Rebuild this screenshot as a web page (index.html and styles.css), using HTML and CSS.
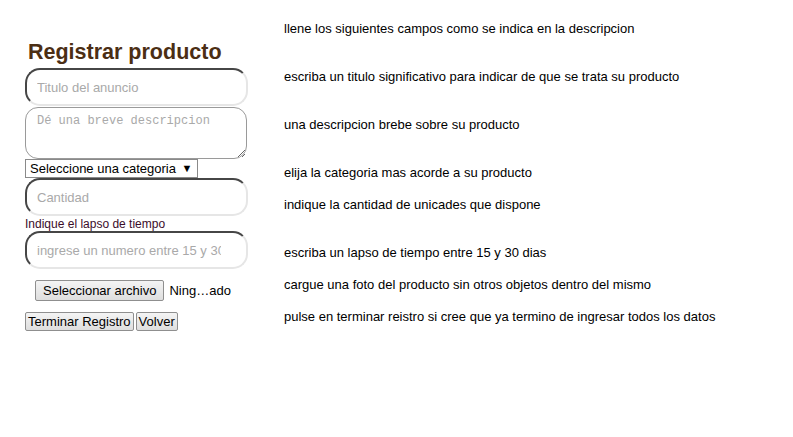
FILE: index.html
```html
<!DOCTYPE html>
<html lang="es">
<head>
<meta charset="utf-8">
<title>Registrar producto</title>
<link rel="stylesheet" href="styles.css">
</head>
<body>
<div class="page">
  <form class="form-col">
    <h1 class="title">Registrar producto</h1>
    <input class="field" type="text" placeholder="Titulo del anuncio">
    <textarea class="area" placeholder="Dé una breve descripcion"></textarea>
    <div class="select">Seleccione una categoria <span class="arrow">▼</span></div>
    <input class="field" type="text" placeholder="Cantidad">
    <div class="label">Indique el lapso de tiempo</div>
    <input class="field field-narrow" type="text" placeholder="ingrese un numero entre 15 y 30">
    <div class="file-row">
      <span class="btn btn-file">Seleccionar archivo</span>
      <span class="file-name">Ning…ado</span>
    </div>
    <div class="actions">
      <button class="btn" type="button">Terminar Registro</button>
      <button class="btn" type="button">Volver</button>
    </div>
  </form>
  <div class="help-col">
    <p class="help">llene los siguientes campos como se indica en la descripcion</p>
    <p class="help gap-l">escriba un titulo significativo para indicar de que se trata su producto</p>
    <p class="help gap-l">una descripcion brebe sobre su producto</p>
    <p class="help gap-l">elija la categoria mas acorde a su producto</p>
    <p class="help gap-s">indique la cantidad de unicades que dispone</p>
    <p class="help gap-l">escriba un lapso de tiempo entre 15 y 30 dias</p>
    <p class="help gap-s">cargue una foto del producto sin otros objetos dentro del mismo</p>
    <p class="help gap-s">pulse en terminar reistro si cree que ya termino de ingresar todos los datos</p>
  </div>
</div>
</body>
</html>
```

FILE: styles.css
```css
html, body {
  margin: 0;
  padding: 0;
  background: #ffffff;
}
body {
  font-family: "Liberation Sans", Arial, sans-serif;
  font-size: 13px;
  color: #000;
}
.page {
  display: flex;
  align-items: flex-start;
}
.form-col {
  width: 223px;
  margin-left: 25px;
  margin-top: 40px;
  display: flex;
  flex-direction: column;
  align-items: flex-start;
}
.title {
  margin: 0 0 3px 3px;
  font-size: 21.5px;
  line-height: 25px;
  font-weight: bold;
  color: #4b2e14;
}
.field {
  box-sizing: border-box;
  width: 223px;
  height: 38px;
  margin: 0;
  padding: 0 10px;
  border: 2px inset #ececec;
  border-top-color: #9a9a9a;
  border-left-color: #9a9a9a;
  border-right-color: #e6e6e6;
  border-bottom-color: #e6e6e6;
  border-radius: 15px;
  font-family: "Liberation Sans", Arial, sans-serif;
  font-size: 13px;
  color: #000;
  background: #fff;
  outline: none;
}
.field::placeholder {
  color: #a9a9a9;
}
.field-narrow {
  padding-right: 25px;
}
.area {
  box-sizing: border-box;
  width: 222px;
  height: 52px;
  margin: 1px 0 0 0;
  padding: 6px 11px;
  border: 1px solid #9a9a9a;
  border-radius: 13px;
  font-family: "Liberation Mono", "Courier New", monospace;
  font-size: 12px;
  background: #fff;
  resize: both;
  outline: none;
}
.area::placeholder {
  color: #a9a9a9;
}
.select {
  box-sizing: border-box;
  width: 173px;
  height: 19px;
  margin-top: 0;
  padding: 0 0 0 4px;
  border: 1px solid #8a8a8a;
  font-size: 13px;
  line-height: 17px;
  white-space: nowrap;
  background: #fff;
}
.arrow {
  font-size: 11px;
  margin-left: 2px;
  vertical-align: 1px;
}
.label {
  margin-top: 1px;
  font-size: 12px;
  line-height: 14px;
  color: #3b0d2a;
}
.file-row {
  margin-top: 11px;
  margin-left: 10px;
  display: flex;
  align-items: center;
  gap: 5px;
  white-space: nowrap;
}
.btn {
  box-sizing: border-box;
  display: inline-block;
  margin: 0;
  padding: 1px 2px;
  font-family: "Liberation Sans", Arial, sans-serif;
  font-size: 13px;
  line-height: 15px;
  color: #000;
  background: linear-gradient(#f4f4f4, #dedede);
  border: 1px solid #8f8f8f;
  border-radius: 2px;
}
.btn-file {
  padding: 2px 7px;
  line-height: 15px;
}
.file-name {
  font-size: 13px;
}
.actions {
  margin-top: 11px;
  display: flex;
  gap: 2px;
}
.help-col {
  margin-left: 36px;
  margin-top: 21px;
}
.help {
  margin: 0;
  font-size: 13px;
  line-height: 16px;
  white-space: nowrap;
}
.gap-l { margin-top: 32px; }
.gap-s { margin-top: 16px; }
```
